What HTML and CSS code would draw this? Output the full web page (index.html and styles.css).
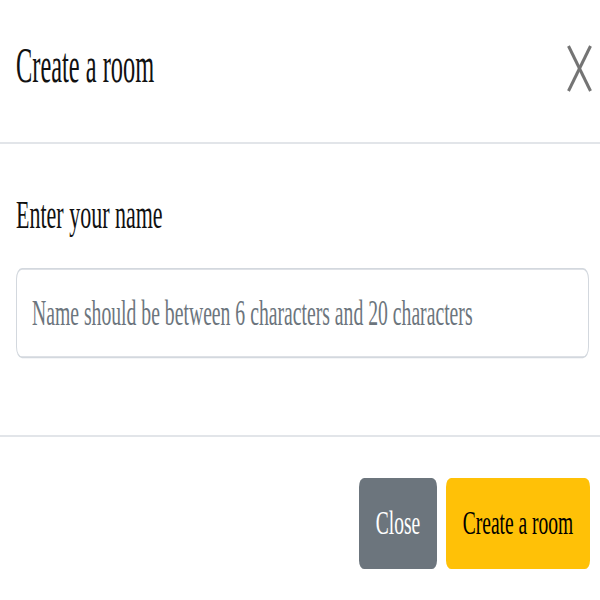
FILE: index.html
```html
<!DOCTYPE html>
<html lang="en">
<head>
<meta charset="utf-8">
<title>Create a room</title>
<link rel="stylesheet" href="styles.css">
</head>
<body>
<div class="modal">
  <div class="modal-header">
    <h5 class="modal-title"><span class="stretch-title">Create a room</span></h5>
    <button class="btn-close" type="button" aria-label="Close">
      <svg width="25" height="47" viewBox="0 0 25 47" preserveAspectRatio="none">
        <line x1="1.5" y1="1" x2="23.5" y2="46" />
        <line x1="23.5" y1="1" x2="1.5" y2="46" />
      </svg>
    </button>
  </div>
  <div class="modal-body">
    <label class="form-label" for="name"><span class="stretch-label">Enter your name</span></label>
    <div class="field">
      <input class="form-control" id="name" type="text" placeholder="Name should be between 6 characters and 20 characters">
    </div>
  </div>
  <div class="modal-footer">
    <button class="btn btn-secondary" type="button">Close</button>
    <button class="btn btn-warning" type="button">Create a room</button>
  </div>
</div>
</body>
</html>
```

FILE: styles.css
```css
html, body {
  margin: 0;
  padding: 0;
  background: #ffffff;
}

body {
  font-family: "Liberation Serif", "Times New Roman", serif;
  color: #111111;
}

.modal {
  width: 600px;
  height: 600px;
  overflow: hidden;
}

.modal-header {
  height: 132px;
  padding: 0 8px 10px 16px;
  display: flex;
  align-items: center;
  justify-content: space-between;
  border-bottom: 2px solid #e2e5e9;
}

.modal-title {
  margin: 0;
  font-weight: normal;
  font-size: 24.4px;
  line-height: 1;
}

.stretch-title {
  display: inline-block;
  transform: scaleY(2.04);
}

.btn-close {
  margin: 5px 0 0 0;
  padding: 0;
  border: 0;
  background: transparent;
  width: 25px;
  height: 47px;
  display: block;
}

.btn-close svg {
  display: block;
}

.btn-close line {
  stroke: #747474;
  stroke-width: 3;
}

.modal-body {
  padding: 60px 11px 77px 16px;
  border-bottom: 2px solid #e2e5e9;
}

.form-label {
  display: block;
  font-size: 22px;
  line-height: 1;
  margin: 0 0 42px 0;
}

.stretch-label {
  display: inline-block;
  transform: scaleY(1.79);
}

.field {
  height: 90px;
}

.form-control {
  display: block;
  box-sizing: border-box;
  width: 100%;
  height: 48.9px;
  margin: 0;
  padding: 0 15px;
  border: 1px solid #d3d8de;
  border-radius: 6px;
  background: #ffffff;
  font-family: "Liberation Serif", "Times New Roman", serif;
  font-size: 19.7px;
  color: #212529;
  transform: scaleY(1.84);
  transform-origin: top left;
  outline: none;
}

.form-control::placeholder {
  color: #6c757d;
  opacity: 1;
}

.modal-footer {
  padding: 41px 10px 0 10px;
  display: flex;
  justify-content: flex-end;
  align-items: flex-start;
  gap: 9px;
}

.btn {
  height: 52px;
  padding: 0;
  border: 0;
  border-radius: 5px;
  font-family: "Liberation Serif", "Times New Roman", serif;
  font-size: 19.5px;
  line-height: 1;
  text-align: center;
  transform: scaleY(1.75);
  transform-origin: top center;
  cursor: pointer;
}

.btn-secondary {
  width: 78px;
  background: #6c757d;
  color: #ffffff;
}

.btn-warning {
  width: 144px;
  background: #ffc107;
  color: #000000;
}
```
